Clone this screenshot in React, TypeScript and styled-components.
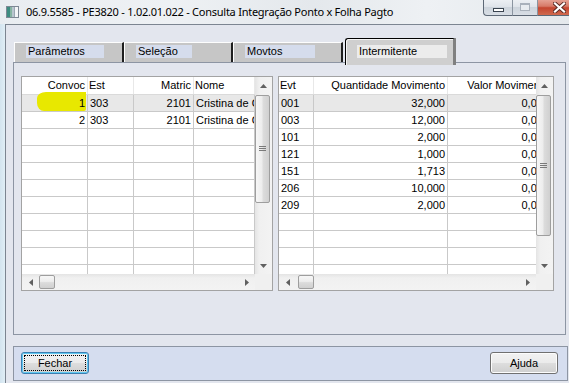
import React from 'react';
import styled, { createGlobalStyle } from 'styled-components';

const Global = createGlobalStyle`
  html, body { margin: 0; padding: 0; width: 569px; height: 383px; overflow: hidden; background: #e3e6ee; }
  * { box-sizing: border-box; }
`;

const Window = styled.div`
  width: 569px;
  height: 383px;
  display: flex;
  flex-direction: column;
  overflow: hidden;
  font-family: "Liberation Sans", Arial, sans-serif;
  font-size: 11px;
  color: #000;
`;

const TitleBar = styled.div`
  height: 24px;
  flex: none;
  display: flex;
  align-items: flex-start;
  overflow: hidden;
  background: linear-gradient(90deg, #e9edf1 0%, #eef1f4 30%, #e4e8ec 55%, #eef1f4 75%, #e4e8ec 100%);
`;

const AppIcon = styled.svg`
  flex: none;
  margin: 6px 0 0 6px;
`;

const TitleText = styled.span`
  margin: 4px 0 0 7px;
  font-family: "Noto Sans", "Open Sans", sans-serif;
  font-size: 11px;
  letter-spacing: -0.25px;
  line-height: 15px;
  white-space: nowrap;
  color: #000;
`;

const Controls = styled.div`
  margin-left: auto;
  margin-right: -11px;
  margin-top: -1px;
  height: 17px;
  display: flex;
  flex: none;
`;

const CtrlBtn = styled.div<{ $w: number; $first?: boolean; $close?: boolean }>`
  width: ${(p) => p.$w}px;
  height: 100%;
  display: flex;
  align-items: center;
  justify-content: center;
  border-left: 1px solid ${(p) => (p.$first ? '#5d6876' : '#8a94a0')};
  border-bottom: 1px solid #5d6876;
  border-bottom-left-radius: ${(p) => (p.$first ? '4px' : '0')};
  background: ${(p) =>
    p.$close
      ? 'linear-gradient(180deg, #e7a79a 0%, #d77a68 45%, #c4452f 55%, #cf6a4f 100%)'
      : 'linear-gradient(180deg, #eef1f5 0%, #dfe4ea 48%, #cdd4dc 52%, #d8dee5 100%)'};
`;

const MinGlyph = styled.div`
  width: 11px;
  height: 4px;
  margin-top: 5px;
  background: #fff;
  border: 1px solid #3a4450;
`;

const MaxGlyph = styled.div`
  width: 10px;
  height: 8px;
  border: 1px solid #a9b1bb;
  border-top-width: 2px;
  background: #e8ecf0;
`;

const Body = styled.div`
  flex: 1;
  display: flex;
  min-height: 0;
`;

const FrameStrip = styled.div`
  width: 5px;
  flex: none;
  background: linear-gradient(90deg, #d3e4ef 0%, #e0eef6 100%);
`;

const Client = styled.div`
  flex: 1;
  display: flex;
  flex-direction: column;
  background: #e3e6ee;
  border-left: 1px solid #7c8591;
  border-top: 1px solid #7c8591;
  padding: 13px 1px 0 7px;
`;

const TabControl = styled.div`
  margin-right: 2px;
  display: flex;
  flex-direction: column;
`;

const TabStrip = styled.div`
  display: flex;
  align-items: flex-end;
  height: 24px;
  padding-left: 1px;
  position: relative;
  z-index: 1;
`;

const Tab = styled.div<{ $w: number }>`
  width: ${(p) => p.$w}px;
  height: 20px;
  flex: none;
  background: #c6c6c6;
  border-top: 1px solid #fdfdfd;
  border-left: 1px solid #fdfdfd;
  border-right: 2px solid #1e1e1e;
  padding: 2px 0 0 11px;
`;

const ActiveTab = styled.div<{ $w: number }>`
  width: ${(p) => p.$w}px;
  height: 27px;
  flex: none;
  margin-left: 2px;
  margin-bottom: -3px;
  background: #cfcfcf;
  border: 1px solid #000;
  border-bottom: none;
  border-right: 3px solid #808080;
  border-top-left-radius: 3px;
  box-shadow: inset 1px 1px 0 #f4f4f4;
  padding: 6px 0 0 11px;
`;

const TabLabel = styled.div<{ $w: number; $active?: boolean }>`
  width: ${(p) => p.$w}px;
  height: 13px;
  line-height: 13px;
  padding-left: 2px;
  white-space: nowrap;
  background: ${(p) => (p.$active ? '#ececec' : '#d5dcec')};
`;

const Panel = styled.div`
  height: 273px;
  border: 1px solid #8d95a3;
  background: #e3e6ee;
  padding: 13px 11px 0 7px;
  display: flex;
  gap: 5px;
  align-items: flex-start;
`;

const GridFrame = styled.div<{ $w: number }>`
  width: ${(p) => p.$w}px;
  height: 215px;
  flex: none;
  border: 1px solid #a3a3a3;
  background: #fff;
  display: grid;
  grid-template-columns: 1fr 17px;
  grid-template-rows: 1fr 16px;
`;

const Viewport = styled.div`
  overflow: hidden;
  min-width: 0;
  min-height: 0;
`;

const HeadRow = styled.div`
  display: flex;
  height: 18px;
  border-bottom: 1px solid #dadada;
  background: #fff;
`;

const HeadCell = styled.div<{ $w: number; $right?: boolean }>`
  flex: none;
  width: ${(p) => p.$w}px;
  border-right: 1px solid #e8e8e8;
  padding: 0 2px 0 1px;
  line-height: 17px;
  white-space: nowrap;
  overflow: hidden;
  text-align: ${(p) => (p.$right ? 'right' : 'left')};
`;

const DataRow = styled.div<{ $sel?: boolean }>`
  display: flex;
  height: 17px;
  background: ${(p) => (p.$sel ? '#e8e8e8' : '#fff')};
`;

const Cell = styled.div<{ $w: number; $right?: boolean; $clip?: boolean }>`
  flex: none;
  position: relative;
  width: ${(p) => p.$w}px;
  border-right: 1px solid #c9c9c9;
  border-bottom: 1px solid #c9c9c9;
  padding: 0 2px 0 2px;
  line-height: 16px;
  white-space: nowrap;
  overflow: ${(p) => (p.$clip ? 'hidden' : 'visible')};
  text-align: ${(p) => (p.$right ? 'right' : 'left')};
`;

const CellText = styled.span`
  position: relative;
  z-index: 1;
`;

const Highlight = styled.span`
  position: absolute;
  left: 15px;
  right: 1px;
  top: -3px;
  bottom: 0;
  background: #e8e800;
  border-radius: 9px 0 2px 7px / 6px 0 2px 8px;
  z-index: 0;
`;

const VScroll = styled.div`
  display: flex;
  flex-direction: column;
  background: linear-gradient(90deg, #e4e4e4 0%, #f0f0f0 25%, #f3f3f3 100%);
`;

const ArrowBox = styled.div`
  height: 17px;
  flex: none;
  display: flex;
  align-items: center;
  justify-content: center;
`;

const VTrack = styled.div<{ $pad: number }>`
  flex: 1;
  padding-top: ${(p) => p.$pad}px;
  display: flex;
  flex-direction: column;
  align-items: flex-start;
`;

const VThumb = styled.div<{ $h: number }>`
  width: 15px;
  height: ${(p) => p.$h}px;
  border: 1px solid #9e9e9e;
  border-radius: 2px;
  background: linear-gradient(90deg, #f7f7f7 0%, #ededed 45%, #dcdcdc 55%, #d0d0d0 100%);
  display: flex;
  align-items: center;
  justify-content: center;
`;

const HScroll = styled.div`
  display: flex;
  background: linear-gradient(180deg, #e4e4e4 0%, #f0f0f0 25%, #f3f3f3 100%);
`;

const HArrow = styled.div`
  width: 17px;
  flex: none;
  display: flex;
  align-items: center;
  justify-content: center;
`;

const HTrack = styled.div<{ $pad: number }>`
  flex: 1;
  padding: 1px 0 0 ${(p) => p.$pad}px;
`;

const HThumb = styled.div`
  width: 16px;
  height: 14px;
  border: 1px solid #9e9e9e;
  border-radius: 2px;
  background: linear-gradient(180deg, #f7f7f7 0%, #ededed 45%, #dcdcdc 55%, #d0d0d0 100%);
`;

const Corner = styled.div`
  background: #f0f0f0;
`;

const Gap = styled.div`
  height: 11px;
  flex: none;
`;

const ButtonBar = styled.div`
  height: 35px;
  border: 1px solid #8d95a3;
  background: #d5ddef;
  padding: 5px 9px 0 7px;
  display: flex;
  justify-content: space-between;
  align-items: flex-start;
`;

const Button = styled.button<{ $focused?: boolean }>`
  width: 68px;
  height: 22px;
  padding: 0;
  font-family: "Liberation Sans", Arial, sans-serif;
  font-size: 11px;
  color: #000;
  border: 1px solid ${(p) => (p.$focused ? '#3c7fb1' : '#707070')};
  border-radius: 3px;
  background: linear-gradient(180deg, #f2f2f2 0%, #ebebeb 48%, #dddddd 52%, #cfcfcf 100%);
  box-shadow: ${(p) => (p.$focused ? 'inset 0 0 0 1px #5fc8f2' : 'inset 0 0 0 1px #fcfcfc')};
  display: flex;
  align-items: center;
  justify-content: center;
  position: relative;
`;

const FocusRing = styled.span`
  position: absolute;
  inset: 2px;
  border: 1px dotted #000;
`;

type Col = { title: string; w: number; right?: boolean; clip?: boolean };

const UpArrow = () => (
  <svg width="7" height="4" viewBox="0 0 7 4"><path d="M0 4 L3.5 0 L7 4 Z" fill="#606060" /></svg>
);
const DownArrow = () => (
  <svg width="7" height="4" viewBox="0 0 7 4"><path d="M0 0 L3.5 4 L7 0 Z" fill="#606060" /></svg>
);
const LeftArrow = () => (
  <svg width="4" height="7" viewBox="0 0 4 7"><path d="M4 0 L0 3.5 L4 7 Z" fill="#606060" /></svg>
);
const RightArrow = () => (
  <svg width="4" height="7" viewBox="0 0 4 7"><path d="M0 0 L4 3.5 L0 7 Z" fill="#606060" /></svg>
);
const Grip = () => (
  <svg width="7" height="6" viewBox="0 0 7 6">
    <path d="M0 0.5 H7 M0 2.5 H7 M0 4.5 H7" stroke="#7a7a7a" strokeWidth="1" />
  </svg>
);

type GridProps = {
  width: number;
  cols: Col[];
  rows: (string[] | null)[];
  thumbH: number;
  hPad: number;
  mark?: boolean;
};

const TOTAL_ROWS = 11;

const DataGrid = ({ width, cols, rows, thumbH, hPad, mark }: GridProps) => {
  const all = Array.from({ length: TOTAL_ROWS }, (_, i) => rows[i] ?? null);
  return (
    <GridFrame $w={width}>
      <Viewport>
        <HeadRow>
          {cols.map((c) => (
            <HeadCell key={c.title} $w={c.w} $right={c.right}>{c.title}</HeadCell>
          ))}
        </HeadRow>
        {all.map((r, i) => (
          <DataRow key={i} $sel={i === 0}>
            {cols.map((c, j) => (
              <Cell key={j} $w={c.w} $right={c.right} $clip={c.clip}>
                {mark && i === 0 && j === 0 && <Highlight />}
                <CellText>{r ? r[j] : ''}</CellText>
              </Cell>
            ))}
          </DataRow>
        ))}
      </Viewport>
      <VScroll>
        <ArrowBox><UpArrow /></ArrowBox>
        <VTrack $pad={1}>
          <VThumb $h={thumbH}><Grip /></VThumb>
        </VTrack>
        <ArrowBox><DownArrow /></ArrowBox>
      </VScroll>
      <HScroll>
        <HArrow><LeftArrow /></HArrow>
        <HTrack $pad={hPad}><HThumb /></HTrack>
        <HArrow><RightArrow /></HArrow>
      </HScroll>
      <Corner />
    </GridFrame>
  );
};

const leftCols: Col[] = [
  { title: 'Convoc', w: 66, right: true },
  { title: 'Est', w: 46 },
  { title: 'Matric', w: 60, right: true },
  { title: 'Nome', w: 61, clip: true },
];

const leftRows = [
  ['1', '303', '2101', 'Cristina de Oliveira'],
  ['2', '303', '2101', 'Cristina de Oliveira'],
];

const rightCols: Col[] = [
  { title: 'Evt', w: 35 },
  { title: 'Quantidade Movimento', w: 134, right: true },
  { title: 'Valor Movimento', w: 104, right: true },
];

const rightRows = [
  ['001', '32,000', '0,000'],
  ['003', '12,000', '0,000'],
  ['101', '2,000', '0,000'],
  ['121', '1,000', '0,000'],
  ['151', '1,713', '0,000'],
  ['206', '10,000', '0,000'],
  ['209', '2,000', '0,000'],
];

export default function App() {
  return (
    <>
      <Global />
      <Window>
        <TitleBar>
          <AppIcon width="13" height="12" viewBox="0 0 13 12">
            <rect x="0.5" y="0.5" width="12" height="11" fill="#f4f6f8" stroke="#7d8894" />
            <rect x="1" y="1" width="3" height="10" fill="#3d8c80" />
            <rect x="4" y="1" width="2" height="10" fill="#86b4a2" />
            <rect x="6" y="1" width="2" height="10" fill="#b9c6cf" />
            <rect x="8" y="1" width="1" height="10" fill="#9aa6b2" />
          </AppIcon>
          <TitleText>06.9.5585 - PE3820 - 1.02.01.022 - Consulta Integração Ponto x Folha Pagto</TitleText>
          <Controls>
            <CtrlBtn $w={29} $first><MinGlyph /></CtrlBtn>
            <CtrlBtn $w={25}><MaxGlyph /></CtrlBtn>
            <CtrlBtn $w={43} $close>
              <svg width="13" height="11" viewBox="0 0 13 11">
                <path d="M2 1.5 L11 9.5 M11 1.5 L2 9.5" stroke="#5a2a24" strokeWidth="4" strokeLinecap="square" />
                <path d="M2 1.5 L11 9.5 M11 1.5 L2 9.5" stroke="#ffffff" strokeWidth="2.2" strokeLinecap="square" />
              </svg>
            </CtrlBtn>
          </Controls>
        </TitleBar>
        <Body>
          <FrameStrip />
          <Client>
            <TabControl>
              <TabStrip>
                <Tab $w={110}><TabLabel $w={78}>Parâmetros</TabLabel></Tab>
                <Tab $w={109}><TabLabel $w={56}>Seleção</TabLabel></Tab>
                <Tab $w={110}><TabLabel $w={70}>Movtos</TabLabel></Tab>
                <ActiveTab $w={111}><TabLabel $w={90} $active>Intermitente</TabLabel></ActiveTab>
              </TabStrip>
              <Panel>
                <DataGrid width={252} cols={leftCols} rows={leftRows} thumbH={108} hPad={0} mark />
                <DataGrid width={276} cols={rightCols} rows={rightRows} thumbH={141} hPad={2} />
              </Panel>
            </TabControl>
            <Gap />
            <ButtonBar>
              <Button $focused><FocusRing />Fechar</Button>
              <Button>Ajuda</Button>
            </ButtonBar>
          </Client>
        </Body>
      </Window>
    </>
  );
}
